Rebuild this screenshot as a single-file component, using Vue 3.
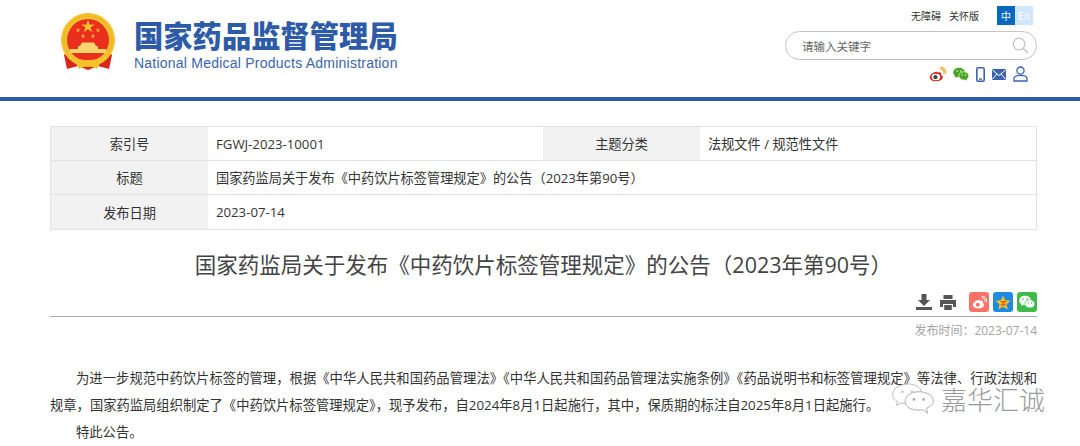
<template>
  <div class="page">
    <header class="top">
      <div class="brand">
        <svg class="emblem" viewBox="0 0 54 58" width="54" height="58">
          <path d="M8 36 L3 42 L6 56 L17 53 L27 57 L37 53 L48 56 L51 42 L46 36 Z" fill="#d8261c" />
          <circle cx="27" cy="27" r="27" fill="#f5c22e" />
          <circle cx="27" cy="27" r="24" fill="none" stroke="#e5a91f" stroke-width="1" stroke-dasharray="2 1.2" />
          <circle cx="27" cy="27" r="21" fill="#ea2f1f" />
          <polygon points="27,6.5 28.6,11.4 33.7,11.4 29.6,14.4 31.1,19.3 27,16.3 22.9,19.3 24.4,14.4 20.3,11.4 25.4,11.4" fill="#f6c32c" />
          <polygon points="17,14.8 17.6,16.4 19.3,16.4 17.9,17.5 18.4,19.2 17,18.2 15.6,19.2 16.1,17.5 14.7,16.4 16.4,16.4" fill="#f6c32c" />
          <polygon points="37,14.8 37.6,16.4 39.3,16.4 37.9,17.5 38.4,19.2 37,18.2 35.6,19.2 36.1,17.5 34.7,16.4 36.4,16.4" fill="#f6c32c" />
          <polygon points="22,20.8 22.6,22.4 24.3,22.4 22.9,23.5 23.4,25.2 22,24.2 20.6,25.2 21.1,23.5 19.7,22.4 21.4,22.4" fill="#f6c32c" />
          <polygon points="32,20.8 32.6,22.4 34.3,22.4 32.9,23.5 33.4,25.2 32,24.2 30.6,25.2 31.1,23.5 29.7,22.4 31.4,22.4" fill="#f6c32c" />
          <path d="M19 33 L21 29.5 L33 29.5 L35 33 L37 33 L37 36 L45 36 L45 40 L9 40 L9 36 L17 36 L17 33 Z" fill="#f8d56c" />
          <path d="M5 38 C12 46 20 47 27 47 C34 47 42 46 49 38 L49 42 C43 50 34 51 27 51 C20 51 11 50 5 42 Z" fill="#f5c22e" />
          <path d="M15 50 L27 47 L39 50 L36 56 L27 52 L18 56 Z" fill="#f5c22e" />
        </svg>
        <div class="brand-text">
          <div class="brand-cn">国家药品监督管理局</div>
          <div class="brand-en">National Medical Products Administration</div>
        </div>
      </div>
      <div class="tools">
        <div class="tool-links">
          <span>无障碍</span>
          <span>关怀版</span>
          <div class="lang"><b>中</b><i>En</i></div>
        </div>
        <div class="search">
          <span>请输入关键字</span>
          <svg viewBox="0 0 18 18" width="17" height="17">
            <circle cx="7.5" cy="7.5" r="6.2" fill="none" stroke="#c4c4c4" stroke-width="1.3" />
            <path d="M12 12 L17 17" stroke="#c4c4c4" stroke-width="1.6" />
          </svg>
        </div>
        <div class="tool-icons">
          <svg viewBox="0 0 18 16" width="17" height="15">
            <path d="M8 5 C3.5 5.5 .5 9 .8 11.5 C1.2 14.5 5 15.6 8.5 15.2 C12.5 14.8 15 12.6 14.7 10.4 C14.5 9.2 13.3 8.9 13 8.7 C13.5 7.4 13.3 5.8 11.5 5.5 C10.5 5.4 9.4 5.8 9 6 C9.2 5 8.8 4.9 8 5 Z" fill="#d9231c" />
            <ellipse cx="7.3" cy="10.6" rx="4.6" ry="3.4" fill="#fff" />
            <circle cx="6.8" cy="10.8" r="2.2" fill="#444" />
            <path d="M11.5 2.2 C14 2 16.5 4 15.9 7.2 M11.8 .4 C15.5 0 18.6 3.2 17.6 7.6" fill="none" stroke="#f0a81e" stroke-width="1.2" />
          </svg>
          <svg viewBox="0 0 18 15" width="16" height="14">
            <ellipse cx="6.8" cy="5.8" rx="6.6" ry="5.4" fill="#4aa61f" />
            <path d="M3 9 L2.5 12 L6 10 Z" fill="#4aa61f" />
            <ellipse cx="12.2" cy="9.6" rx="5.6" ry="4.6" fill="#4aa61f" stroke="#fff" stroke-width=".7" />
            <path d="M15 12.5 L15.8 14.8 L12.5 13.5 Z" fill="#4aa61f" />
            <circle cx="4.6" cy="4.2" r=".9" fill="#fff" /><circle cx="9" cy="4.2" r=".9" fill="#fff" />
            <circle cx="10.4" cy="8.6" r=".7" fill="#fff" /><circle cx="14" cy="8.6" r=".7" fill="#fff" />
          </svg>
          <svg viewBox="0 0 9 15" width="9" height="15">
            <rect x=".8" y=".8" width="7.4" height="13.4" rx="1.4" fill="none" stroke="#3b63ac" stroke-width="1.6" />
            <rect x="3" y="11.4" width="3" height="1.4" fill="#3b63ac" />
          </svg>
          <svg viewBox="0 0 14 11" width="14" height="11">
            <rect width="14" height="11" rx="1" fill="#3b63ac" />
            <path d="M.5 1 L7 6.5 L13.5 1 M.5 10 L5 5 M13.5 10 L9 5" fill="none" stroke="#fff" stroke-width="1" />
          </svg>
          <svg viewBox="0 0 15 16" width="15" height="16">
            <circle cx="7.5" cy="4.6" r="3.6" fill="none" stroke="#3b63ac" stroke-width="1.3" />
            <path d="M1 15 L1 12.5 C1 10.4 3.5 9.4 7.5 9.4 C11.5 9.4 14 10.4 14 12.5 L14 15 Z" fill="none" stroke="#3b63ac" stroke-width="1.3" />
          </svg>
        </div>
      </div>
    </header>
    <div class="rule"></div>

    <main class="content">
      <div class="meta">
        <div class="th">索引号</div>
        <div class="td">FGWJ-2023-10001</div>
        <div class="th">主题分类</div>
        <div class="td">法规文件 / 规范性文件</div>
        <div class="th">标题</div>
        <div class="td wide">国家药监局关于发布《中药饮片标签管理规定》的公告（2023年第90号）</div>
        <div class="th">发布日期</div>
        <div class="td wide">2023-07-14</div>
      </div>

      <h1>国家药监局关于发布《中药饮片标签管理规定》的公告（2023年第90号）</h1>

      <div class="share">
        <svg viewBox="0 0 16 16" width="16" height="16">
          <path d="M5.5 0 H10.5 V6 H14 L8 12 L2 6 H5.5 Z" fill="#555" />
          <path d="M0 13 H16 V16 H0 Z" fill="#555" />
        </svg>
        <svg class="printer" viewBox="0 0 16 15" width="16" height="15">
          <path d="M3.5 0 H12.5 V4 H3.5 Z M0 5 H16 V12 H13 V9 H3 V12 H0 Z M4.2 10 H11.8 V15 H4.2 Z" fill="#555" />
        </svg>
        <span class="chip red">
          <svg viewBox="0 0 18 16" width="15" height="13">
            <path d="M8 5 C3.5 5.5 .5 9 .8 11.5 C1.2 14.5 5 15.6 8.5 15.2 C12.5 14.8 15 12.6 14.7 10.4 C14.5 9.2 13.3 8.9 13 8.7 C13.5 7.4 13.3 5.8 11.5 5.5 C10.5 5.4 9.4 5.8 9 6 C9.2 5 8.8 4.9 8 5 Z" fill="#fff" />
            <circle cx="7" cy="10.8" r="2.4" fill="#f87268" />
            <path d="M11.5 2.2 C14 2 16.5 4 15.9 7.2 M11.8 .4 C15.5 0 18.6 3.2 17.6 7.6" fill="none" stroke="#fff" stroke-width="1.2" />
          </svg>
        </span>
        <span class="chip blue">
          <svg viewBox="0 0 16 15" width="16" height="15">
            <polygon points="8,.5 10.2,5.3 15.5,5.8 11.5,9.3 12.7,14.5 8,11.8 3.3,14.5 4.5,9.3 .5,5.8 5.8,5.3" fill="#f7c11c" />
            <path d="M5.6 6.6 H10.4 L6.6 9.8 H10.8" fill="none" stroke="#d9572a" stroke-width="1.2" />
          </svg>
        </span>
        <span class="chip green">
          <svg viewBox="0 0 18 15" width="16" height="14">
            <ellipse cx="6.8" cy="5.8" rx="6.6" ry="5.4" fill="#fff" />
            <path d="M3 9 L2.5 12 L6 10 Z" fill="#fff" />
            <ellipse cx="12.2" cy="9.6" rx="5.6" ry="4.6" fill="#fff" stroke="#3fbb4a" stroke-width=".7" />
            <circle cx="4.6" cy="4.2" r=".9" fill="#3fbb4a" /><circle cx="9" cy="4.2" r=".9" fill="#3fbb4a" />
            <circle cx="10.4" cy="8.6" r=".7" fill="#3fbb4a" /><circle cx="14" cy="8.6" r=".7" fill="#3fbb4a" />
          </svg>
        </span>
      </div>
      <div class="pubtime">发布时间：2023-07-14</div>

      <article>
        <p>为进一步规范中药饮片标签的管理，根据《中华人民共和国药品管理法》《中华人民共和国药品管理法实施条例》《药品说明书和标签管理规定》等法律、行政法规和规章，国家药监局组织制定了《中药饮片标签管理规定》，现予发布，自2024年8月1日起施行，其中，保质期的标注自2025年8月1日起施行。</p>
        <p>特此公告。</p>
      </article>
    </main>

    <div class="watermark">
      <svg viewBox="0 0 44 32" width="44" height="31">
        <path d="M17 1 C8 1 1 6 1 12 C1 15 3 18 6 19 L5 23 L10 20.5 C11 21 12 21 14 21" fill="none" stroke="#bbb" stroke-width="1" />
        <path d="M17 1 C24 1 29 4 31 9" fill="none" stroke="#bbb" stroke-width="1" />
        <path d="M28 9 C20 9 14 13 14 19 C14 25 20 28 28 28 C30 28 31 28 32 27.500 L37 31 L36 26 C40 24 43 22 43 19 C43 13 36 9 28 9 Z" fill="#fff" fill-opacity=".7" stroke="#aaa" stroke-width="1" />
        <circle cx="11" cy="9" r="1.5" fill="#ccc" /><circle cx="21" cy="9" r="1.5" fill="#ccc" />
        <circle cx="23" cy="17" r="1.4" fill="#aaa" /><circle cx="33" cy="17" r="1.4" fill="#aaa" />
      </svg>
      <span>嘉华汇诚</span>
    </div>
  </div>
</template>

<script setup>
</script>

<style>
html, body { background: #fff; }
body { overflow: hidden; }
</style>

<style scoped>
.page {
  position: relative;
  width: 1080px;
  height: 446px;
  overflow: hidden;
  font-family: "Open Sans", "Noto Sans CJK SC", sans-serif;
  color: #333;
  background: #fff;
}
.top {
  height: 97px;
  display: flex;
  justify-content: space-between;
  padding: 0 43px 0 61px;
  box-sizing: border-box;
}
.brand { display: flex; gap: 19px; padding-top: 13px; }
.brand-text { padding-top: 2px; }
.brand-cn {
  font-family: "Noto Sans CJK SC", sans-serif;
  font-size: 29.3px;
  font-weight: 900;
  line-height: 38px;
  color: #2d5ba8;
  white-space: nowrap;
}
.brand-en {
  margin-top: 1px;
  font-family: "Liberation Sans", Arial, sans-serif;
  font-size: 14px;
  line-height: 18px;
  letter-spacing: .23px;
  color: #3a65ad;
  white-space: nowrap;
}
.tools { width: 252px; display: flex; flex-direction: column; align-items: stretch; padding-top: 6px; }
.tool-links {
  display: flex;
  align-items: center;
  justify-content: flex-end;
  gap: 8px;
  height: 19px;
  font-family: "Noto Sans CJK SC", sans-serif;
  font-size: 10px;
  color: #333;
  padding-right: 4px;
}
.lang { display: flex; margin-left: 10px; font-size: 10px; line-height: 19px; text-align: center; }
.lang b { width: 18px; background: #0868c0; color: #fff; font-weight: 400; }
.lang i { width: 18px; background: #cfe6fb; color: #fff; font-style: normal; }
.search {
  margin-top: 6px;
  height: 29px;
  border: 1px solid #c4c4c4;
  border-radius: 15px;
  box-sizing: border-box;
  display: flex;
  align-items: center;
  justify-content: space-between;
  padding: 0 7px 0 16px;
  font-size: 11.5px;
  color: #666;
}
.tool-icons {
  margin-top: 6px;
  display: flex;
  align-items: center;
  justify-content: flex-end;
  gap: 7px;
  padding-right: 9px;
}
.rule { height: 4px; background: #2d5ba8; }
.content { padding: 25px 43px 0 50px; }
.meta {
  display: grid;
  grid-template-columns: 157px 335px 157px 338px;
  grid-auto-rows: 34px;
  border: 1px solid #e2e2e2;
  box-sizing: border-box;
  font-size: 13.2px;
  color: #333;
}
.th, .td {
  display: flex;
  align-items: center;
  border-bottom: 1px solid #e2e2e2;
  box-sizing: border-box;
}
.meta > :nth-last-child(-n+2) { border-bottom: 0; }
.th { justify-content: center; background: #f2f2f2; }
.td { padding-left: 8px; }
.wide { grid-column: span 3; }
h1 {
  margin: 19px 0 0;
  font-size: 21.5px;
  font-weight: 400;
  line-height: 32px;
  text-align: center;
  color: #444;
}
.share {
  margin-top: 10px;
  height: 22px;
  display: flex;
  align-items: center;
  justify-content: flex-end;
  gap: 4px;
}
.printer { margin: 0 9px 0 4px; }
.chip {
  width: 20px;
  height: 20px;
  border-radius: 3px;
  display: flex;
  align-items: center;
  justify-content: center;
}
.red { background: #f87268; }
.blue { background: #1d8ae6; }
.green { background: #3fbb4a; }
.pubtime {
  margin-top: 3px;
  border-top: 1px solid #aaa;
  padding-top: 5px;
  text-align: right;
  font-size: 12px;
  line-height: 18px;
  color: #a3a3a3;
}
article { margin-top: 25px; font-size: 13.3px; line-height: 27px; color: #333; text-align: justify; }
article p { margin: 0; text-indent: 26px; }
.watermark {
  position: absolute;
  left: 891px;
  top: 380px;
  display: flex;
  align-items: center;
  gap: 6px;
  font-family: "Noto Sans CJK SC", sans-serif;
  font-size: 26px;
  font-weight: 300;
  color: #9a9a9a;
  text-shadow: 0 0 2px #fff, 1px 1px 1px #fff;
}
</style>
